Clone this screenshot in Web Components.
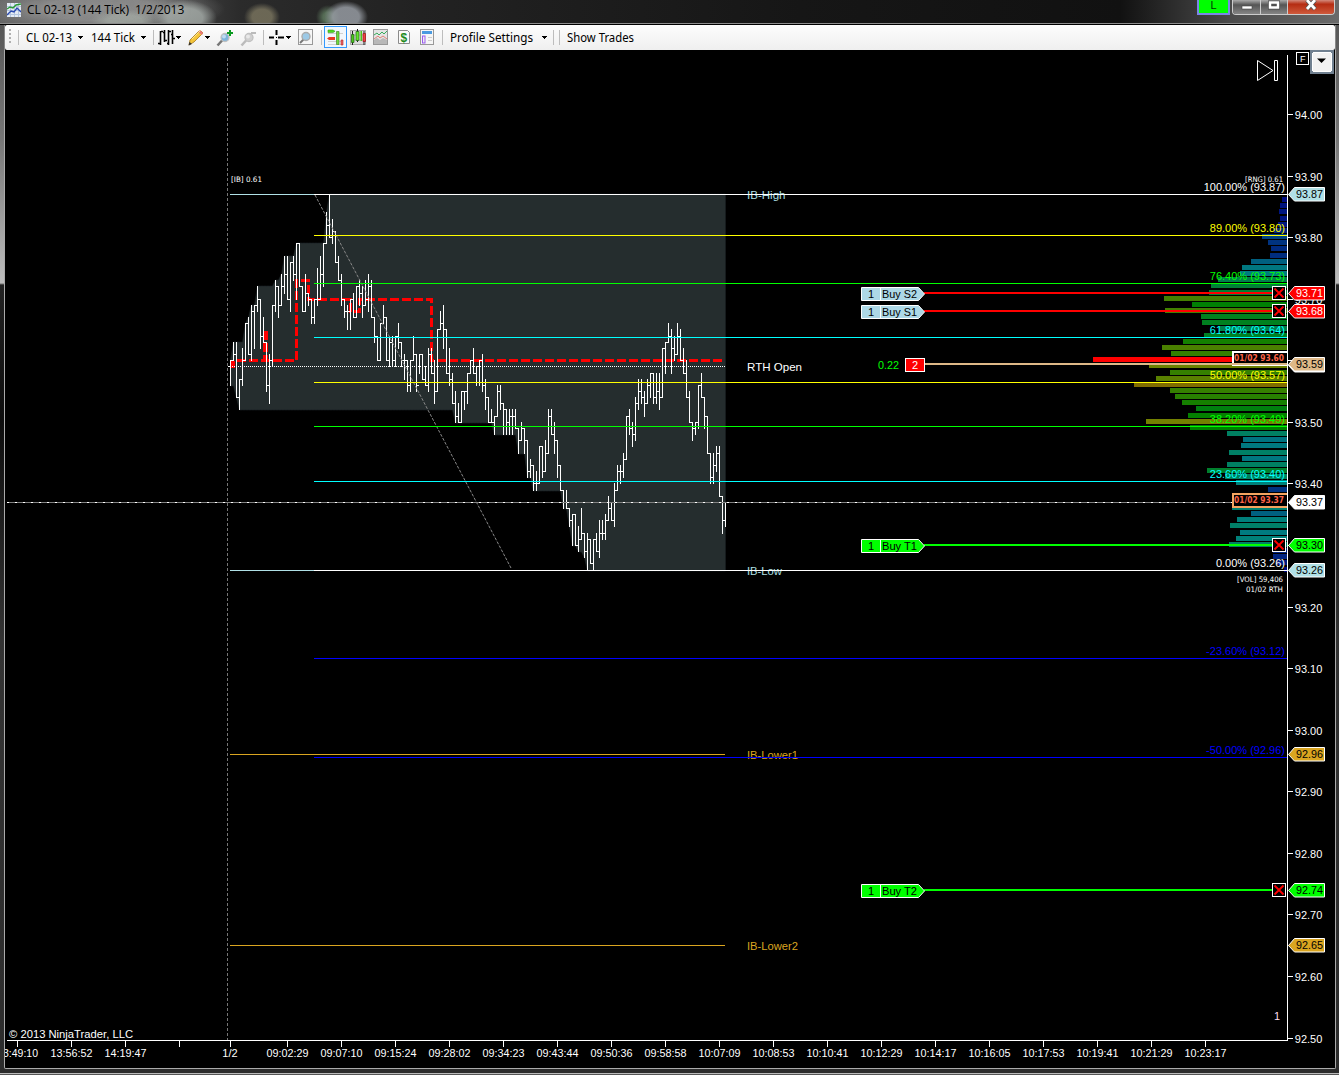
<!DOCTYPE html>
<html lang="en">
<head>
<meta charset="utf-8">
<title>CL 02-13 (144 Tick)  1/2/2013</title>
<style>
  html, body { margin: 0; height: 100%; overflow: hidden; background: #000; }
  body { font-family: "Liberation Sans", Arial, sans-serif; font-size: 11px; }
</style>
</head>
<body>
<chart-window>
  <title-bar slot="title">CL 02-13 (144 Tick)&nbsp; 1/2/2013</title-bar>
  <tool-bar slot="tools">
    <tool-grip></tool-grip>
    <tool-sep w="8"></tool-sep>
    <tool-label w="52" len="46">CL 02-13</tool-label><tool-icon w="13" name="arrow"></tool-icon>
    <tool-label w="50" len="44">144 Tick</tool-label><tool-icon w="12" name="arrow"></tool-icon>
    <tool-sep w="5"></tool-sep>
    <tool-icon w="18" name="bars"></tool-icon><tool-icon w="11" name="arrow"></tool-icon>
    <tool-icon w="18" name="pencil"></tool-icon><tool-icon w="11" name="arrow"></tool-icon>
    <tool-icon w="24" name="zoomin"></tool-icon>
    <tool-icon w="23" name="zoomout"></tool-icon>
    <tool-sep w="5"></tool-sep>
    <tool-icon w="18" name="cross"></tool-icon><tool-icon w="11" name="arrow"></tool-icon>
    <tool-icon w="24" name="page"></tool-icon>
    <tool-sep w="3"></tool-sep>
    <tool-icon w="25" name="trader"></tool-icon>
    <tool-icon w="23" name="candles"></tool-icon>
    <tool-icon w="23" name="area"></tool-icon>
    <tool-icon w="24" name="dollar"></tool-icon>
    <tool-icon w="23" name="props"></tool-icon>
    <tool-sep w="8"></tool-sep>
    <tool-label w="92" len="83">Profile Settings</tool-label><tool-icon w="11" name="arrow"></tool-icon>
    <tool-sep w="6"></tool-sep>
    <tool-sep w="8"></tool-sep>
    <tool-label w="80" len="67">Show Trades</tool-label>
  </tool-bar>
  <price-chart></price-chart>
</chart-window>

<script>
(function () {
    'use strict';

    function attach(el, html) {
        const root = el.attachShadow({ mode: 'open' });
        root.innerHTML = html;
        return root;
    }

    class ChartWindow extends HTMLElement {
        constructor() {
            super();
            attach(this, `
            <style>
              :host {
                display: grid;
                grid-template-rows: 25px 25px 1017px 8px;
                width: 1339px;
                height: 1075px;
                overflow: hidden;
                background: linear-gradient(#505050 0, #777 140px, #bdbdbd 283px, #222 285px, #0d0d0d 420px, #333 640px, #2c2c2c 100%);
              }
              .body {
                margin: 0 3px 0 4px;
                border-left: 1px solid #aaa;
                border-right: 1px solid #aaa;
                background: #000;
                overflow: hidden;
              }
              .tools { border-color: #888; }
              .foot {
                box-sizing: border-box;
                margin-left: 4px;
                margin-right: 3px;
                border: 1px solid #aaa;
                border-top: 0;
                border-radius: 0 0 3px 3px;
                height: 2px;
                background: #000;
              }
              .bottom {
                background: linear-gradient(#2c2c2c 0 6px, #bbb 6px 7px, #555 7px);
              }
            </style>
            <slot name="title"></slot>
            <div class="body tools"><slot name="tools"></slot></div>
            <div class="body"><slot></slot></div>
            <div class="bottom"><div class="foot"></div></div>`);
        }
    }

    class TitleBar extends HTMLElement {
        constructor() {
            super();
            attach(this, `
            <style>
              :host {
                display: flex;
                align-items: flex-start;
                box-sizing: border-box;
                height: 25px;
                overflow: hidden;
                border-bottom: 1px solid #000;
                box-shadow: inset 0 -1px #8c8c8c;
                background:
                  radial-gradient(ellipse 22px 16px at 346px 17px, rgba(150,155,162,.85) 60%, transparent),
                  radial-gradient(ellipse 12px 12px at 328px 17px, rgba(90,115,90,.9) 40%, transparent),
                  radial-gradient(ellipse 18px 14px at 262px 17px, rgba(130,124,100,.75) 55%, transparent),
                  radial-gradient(ellipse 32px 18px at 185px 18px, rgba(165,172,168,.8) 55%, transparent),
                  radial-gradient(ellipse 34px 12px at 125px 21px, rgba(165,172,165,.7) 50%, transparent),
                  radial-gradient(ellipse 125px 26px at 100px 9px, rgba(145,145,145,.85) 45%, transparent),
                  linear-gradient(90deg, #606060 0, #555 120px, #2b2b2b 240px, #222 420px, #161616 800px, #111 1120px, #4a4a4a 1230px, #6a6a6a 1339px);
              }
              .icon { margin: 3px 6px 0 7px; flex: none; }
              .text {
                font: 12px/20px "Open Sans", "Noto Sans", sans-serif;
                letter-spacing: -0.1px;
                color: #000;
                flex: 1;
                text-shadow: 0 0 6px rgba(190,190,190,.6);
              }
              .link {
                box-sizing: border-box;
                width: 33px; height: 15px;
                margin-right: 2px;
                border: 2px solid #7a86e8;
                border-top: 0;
                background: #0f0;
                color: #043004;
                font: 11px/11px "Liberation Sans", sans-serif;
                text-align: center;
              }
              .buttons {
                display: flex;
                height: 14px;
                margin-right: 4px;
                border: 1px solid #ccc;
                border-top: 0;
                border-radius: 0 0 4px 4px;
                overflow: hidden;
              }
              .buttons svg { display: block; }
            </style>
            <svg class="icon" width="14" height="14" viewBox="0 0 14 14">
              <rect width="14" height="14" fill="#e4ebf4"/>
              <path d="M0 3.5h14M0 7.5h14M0 11.5h14M3.5 0v14M7.5 0v14M11.5 0v14" stroke="#b4c6e0" fill="none"/>
              <path d="M0 6l3-2 3 1 3-3 5-1" stroke="#2a9a35" fill="none" stroke-width="1.400"/>
              <path d="M0 12l4-4 3 1 3-4 4 4" stroke="#2a4ab0" fill="none" stroke-width="1.400"/>
            </svg>
            <span class="text"><slot></slot></span>
            <span class="link">L</span>
            <span class="buttons">
              <svg width="101" height="14" viewBox="0 0 101 14">
                <defs>
                  <linearGradient id="g" x2="0" y2="1"><stop stop-color="#aaa"/><stop offset=".35" stop-color="#555"/><stop offset="1" stop-color="#858585"/></linearGradient>
                  <linearGradient id="r" x2="0" y2="1"><stop stop-color="#d38a7c"/><stop offset=".3" stop-color="#b52c12"/><stop offset="1" stop-color="#cf5a3c"/></linearGradient>
                </defs>
                <rect width="54" height="14" fill="url(#g)"/>
                <rect x="54" width="47" height="14" fill="url(#r)"/>
                <path d="M27.500 0v14M54.500 0v14" stroke="#ccc"/>
                <rect x="9" y="6" width="10" height="3" fill="#fff" stroke="#444" stroke-width=".6"/>
                <rect x="37" y="2.500" width="8" height="5" fill="none" stroke="#444" stroke-width="4"/>
                <rect x="37" y="2.500" width="8" height="5" fill="none" stroke="#fff" stroke-width="2.500"/>
                <path d="M74 0l8 9M82 0l-8 9" stroke="#555" stroke-width="4.500"/>
                <path d="M74 0l8 9M82 0l-8 9" stroke="#fff" stroke-width="2.800"/>
              </svg>
            </span>`);
        }
    }

    class ToolBar extends HTMLElement {
        constructor() {
            super();
            attach(this, `
            <style>
              :host {
                display: flex;
                height: 25px;
                background: linear-gradient(#fdfdfd, #efefef);
                border-radius: 2px;
              }
            </style>
            <slot></slot>`);
        }
    }

    class ToolGrip extends HTMLElement {
        constructor() {
            super();
            attach(this, `
            <style>
              :host { display: block; width: 13px; flex: none; }
              svg { display: block; }
            </style>
            <svg width="13" height="25"><path d="M5 4v16" stroke="#b0b0b0" stroke-width="2" stroke-dasharray="2 2"/></svg>`);
        }
    }

    class ToolSep extends HTMLElement {
        constructor() {
            super();
            attach(this, `
            <style>
              :host { display: block; width: ${this.getAttribute('w')}px; flex: none; }
              i { display: block; width: 1px; height: 15px; margin-top: 5px; background: #bdbdbd; }
            </style>
            <i></i>`);
        }
    }

    // label fitted to a fixed advance, like the system toolbar font
    class ToolLabel extends HTMLElement {
        constructor() {
            super();
            attach(this, `
            <style>
              :host { display: block; width: ${this.getAttribute('w')}px; flex: none; }
              svg { display: block; }
              text { font: 12px "Noto Sans", sans-serif; fill: #000; }
            </style>
            <svg width="${this.getAttribute('w')}" height="25">
              <text x="0" y="16.500" textLength="${this.getAttribute('len')}" lengthAdjust="spacingAndGlyphs">${this.textContent}</text>
            </svg>`);
        }
    }

    const LENS = (c1, c2) => `
      <path d="M1.500 20.500l5-5.500" stroke="${c1}" stroke-width="2.500"/>
      <circle cx="9" cy="12.500" r="4" fill="${c2}" stroke="#c0c0c0" stroke-width="1.300"/>
      <circle cx="8" cy="11.500" r="2" fill="#fff" opacity=".5"/>`;

    const ICONS = {
        arrow: '<path d="M0 11h5v1h-1v1h-1v1h-1v-1h-1v-1h-1z" fill="#000"/>',
        bars: '<path d="M2.500 6v14M0 18.500h2M3 6.500h2M6.500 5v12M5 7.500h1M7 15.500h2M10.500 5v15M9 18.500h1M11 6.500h2M14.500 5v14M13 9.500h1M15 13.500h2" stroke="#000" stroke-width="1.600" fill="none"/>',
        pencil: '<path d="M2 20l1-5 9-9q2-1 4 2l-9 9z" fill="#f4c53a" stroke="#a5791c" stroke-width=".8"/><path d="M11 7l4 3 1-2q-2-3-4-2z" fill="#e87878"/><path d="M5 14l8-8" stroke="#ffe98e"/><path d="M1.500 20.500l1-3.500 2.500 2z" fill="#333"/>',
        zoomin: LENS('#777', '#7db4dd') + '<path d="M11 8h6M14 5v6" stroke="#0a9a20" stroke-width="2"/>',
        zoomout: LENS('#bbb', '#d0d0d0') + '<path d="M11 8h5" stroke="#bbb" stroke-width="2"/>',
        cross: '<path d="M1 12.500h5M10 12.500h6M8.500 5v5M8.500 15v5" stroke="#000" stroke-width="2"/><path d="M8 12.500h1" stroke="#000"/>',
        page: '<rect x="1.500" y="4.500" width="14" height="15" fill="#f6f6f6" stroke="#999"/><path d="M3 18l4-4" stroke="#777" stroke-width="2"/><circle cx="9" cy="11.500" r="4" fill="#9cc9e6" stroke="#aaa" stroke-width="1.400"/>',
        trader: '<rect x=".5" y="1.500" width="22" height="21" fill="#f2f7fc" stroke="#3399ff"/><path d="M4 8.500h15M4 16.500h15M4 19.500h15" stroke="#d0d0d0"/><path d="M4 5h5l2 1.300-2 1.300h-5z" fill="#4ddb20" stroke="#399c1a" stroke-width=".6"/><path d="M3 13.500l2-1.500h6v3h-6z" fill="#e83a22"/><path d="M12.500 6.500h2.500v13h-2.500z" fill="#6ddb3d" stroke="#4b8a2c" stroke-width=".7"/><path d="M17 15h2v5h-2z" fill="#e66" stroke="#a22" stroke-width=".6"/>',
        candles: '<rect x="1.500" y="5.500" width="15" height="14" fill="#ddd" stroke="#aaa"/><path d="M3 10h12M3 15h12" stroke="#bbb"/><path d="M3.500 6v14M8.500 4v13M15 6v14" stroke="#222"/><path d="M2.500 9.500h2.500v8H2.500z" fill="#4bc41d" stroke="#1d6310" stroke-width=".7"/><path d="M7 6.500h3v9H7z" fill="#64e52e" stroke="#1d6310" stroke-width=".7"/><path d="M11.500 6h1.500v10h-1.500z" fill="#4bc41d"/><path d="M14 8.500h2.500v8H14z" fill="#e44" stroke="#911" stroke-width=".7"/>',
        area: '<rect x="1.500" y="4.500" width="14" height="15" fill="#e4e4e4" stroke="#999"/><path d="M2 15l3-2 3 2 3-2 4 2v4H2z" fill="#b8b8b8"/><path d="M2 10l3-2 2 2 3-3 2 2 3-3" stroke="#39ad5c" fill="none"/><path d="M2 14l4-3 2 2 3-2 4 3" stroke="#e08078" fill="none"/>',
        dollar: '<path d="M3.500 5.500h9l2 2v11h-11z" fill="#fafafa" stroke="#8b8b8b"/><text x="5.500" y="16.500" font-size="12" font-weight="700" font-family="Liberation Sans, sans-serif" fill="#1d8a1d">$</text>',
        props: '<rect x="1.500" y="4.500" width="13" height="15" fill="#f6f6f6" stroke="#999"/><path d="M3 7.500h10" stroke="#4a9ae0" stroke-width="3"/><rect x="3.500" y="11" width="2.500" height="7" fill="#eee" stroke="#9a5af0"/><path d="M9 12.500h4M9 15.500h4" stroke="#ccc"/>'
    };

    class ToolIcon extends HTMLElement {
        constructor() {
            super();
            const w = this.getAttribute('w');
            attach(this, `
            <style>
              :host { display: block; width: ${w}px; flex: none; }
              svg { display: block; overflow: visible; }
            </style>
            <svg width="${w}" height="25" viewBox="0 0 ${w} 25">${ICONS[this.getAttribute('name')]}</svg>`);
        }
    }

    // [high, low, close] of each bar, in ticks below 93.87
    const BARS = [
        [27,31,27],[24,27,26],[24,33,33],[30,35,30],[25,31,27],[21,27,21],[20,26,26],[18,27,19],[18,25,18],[15,19,17],
        [17,25,23],[20,24,24],[24,32,31],[26,34,27],[18,28,18],[14,19,15],[15,20,18],[13,18,15],[10,16,13],[10,17,17],
        [11,19,11],[10,14,13],[8,17,8],[8,15,15],[15,19,19],[13,19,16],[16,18,17],[17,21,20],[17,21,17],[12,18,17],
        [10,17,13],[8,15,8],[3,8,5],[0,7,7],[4,8,6],[6,11,11],[10,14,14],[13,18,17],[17,20,19],[18,22,19],
        [17,22,17],[16,20,20],[15,20,15],[14,18,16],[15,20,18],[14,18,17],[13,19,15],[14,20,20],[20,24,23],[23,27,27],
        [21,27,21],[18,21,20],[20,27,27],[23,28,24],[23,28,27],[23,28,23],[21,25,24],[24,28,27],[26,30,27],[27,32,31],
        [27,32,27],[23,27,26],[26,32,31],[26,29,26],[26,30,30],[28,31,31],[25,32,26],[25,29,29],[27,34,32],[22,32,22],
        [19,22,21],[18,25,22],[22,29,29],[25,31,30],[29,34,34],[32,37,36],[34,37,37],[32,37,32],[32,35,32],[29,34,29],
        [27,29,27],[25,29,29],[28,31,28],[27,31,27],[26,32,31],[30,35,33],[33,37,37],[35,37,37],[36,39,36],[31,36,32],
        [31,35,34],[34,39,35],[35,39,37],[35,39,36],[35,39,36],[35,38,38],[38,42,40],[37,40,38],[38,42,40],[40,46,45],
        [43,46,44],[44,48,47],[45,48,47],[41,47,41],[41,46,45],[40,45,42],[35,42,36],[35,39,39],[37,42,40],[40,46,44],
        [44,48,48],[48,51,50],[48,51,51],[51,54,53],[52,57,52],[52,57,57],[54,58,56],[51,56,55],[55,59,58],[55,61,56],
        [56,60,60],[56,61,56],[55,58,58],[53,59,55],[53,56,55],[52,56,53],[49,53,51],[50,53,53],[47,54,48],[44,48,45],
        [44,47,45],[42,46,43],[36,43,36],[35,39,38],[37,41,39],[33,40,34],[30,35,32],[30,34,33],[32,36,34],[30,34,31],
        [29,33,29],[29,34,33],[29,34,32],[29,35,33],[25,33,25],[24,29,24],[21,24,23],[22,29,25],[23,27,26],[21,26,23],
        [22,27,27],[25,29,29],[27,33,33],[32,37,37],[37,40,38],[37,39,37],[31,38,31],[29,33,33],[33,38,36],[36,42,42],
        [42,47,46],[42,47,44],[41,45,42],[41,49,49],[49,55,53],[50,54,51]
    ];

    // volume by price, px width, one entry per tick from 93.86 down
    const VOLUME = [
        5,7,8,7,9,13,25,19,16,17,36,45,47,69,76,78,123,95,122,86,85,68,83,104,125,116,194,138,117,131,153,
        117,112,105,91,99,141,97,60,44,46,58,45,60,80,62,51,19,45,50,55,36,50,57,47,51,58,14,14,10,3
    ];

    const row = t => Math.floor(194.5 + 6.157 * t);
    const hl = (x1, x2, y, c, h = 1) => `<rect x="${x1}" y="${y}" width="${x2 - x1}" height="${h}" fill="${c}"/>`;
    const vl = (x, y1, y2, c) => `<rect x="${x}" y="${y1}" width="1" height="${y2 - y1}" fill="${c}"/>`;

    function txt(s, x, y, fill, o = {}) {
        const len = o.len ? ` textLength="${o.len}" lengthAdjust="spacingAndGlyphs"` : '';
        return `<text x="${x}" y="${y}" fill="${fill}" text-anchor="${o.anchor || 'start'}" class="${o.cls || ''}"${len}>${s}</text>`;
    }

    function ibRange() {
        let hi = 99, lo = 0;
        const top = [], bottom = [];
        BARS.forEach(([h, l], k) => {
            hi = Math.min(hi, h);
            lo = Math.max(lo, l);
            top.push(`${230.5 + 3 * k},${row(hi)}`);
            bottom.unshift(`${230.5 + 3 * k},${row(lo) + 1}`);
        });
        return `<polygon points="${top.concat(bottom).join(' ')}" fill="#252d2e" stroke="#1a2021" stroke-width=".6"/>`;
    }

    function ohlc() {
        return BARS.map(([h, l, c], k) => {
            const x = 230 + 3 * k;
            let s = vl(x, row(h), row(l) + 1, '#fff');
            if (k < BARS.length - 1) s += hl(x, x + 3, row(c), '#fff');
            return s;
        }).join('') + hl(228, 230, row(28), '#fff');
    }

    function volume() {
        return VOLUME.map((w, i) => {
            const c = w === 194 ? '#f00' : `hsl(${Math.round(240 * (1 - w / 194))},100%,25%)`;
            return hl(1287 - w, 1287, row(i + 1) - 3, c, 5);
        }).join('');
    }

    function fib(y, color, label) {
        return hl(314, 1287, y, color) + txt(label, 1285, y - 3, color, { anchor: 'end' });
    }

    function tagShape(y, fill) {
        return `<path d="M1288.500 ${y}.5L1294.500 ${y - 6.5}H1324.500V${y + 7}H1294.500Z" fill="${fill}" stroke="#fff"/>`;
    }

    function priceTag(y, fill, label, color = '#000') {
        return tagShape(y, fill) + txt(label, 1296, y + 4, color, { len: 27 });
    }

    function closeBox(y) {
        return `<rect x="1272.500" y="${y - 6.5}" width="13" height="13" fill="#000" stroke="#fff"/>` +
            `<path d="M1274.500 ${y - 4.5}l9 9m0 -9l-9 9" stroke="#f00" stroke-width="1.800"/>`;
    }

    function order(y, fill, line, label) {
        return hl(924, 1273, y - 1, line, 2) +
            `<path d="M861.500 ${y - 5.5}H918.500L924.500 ${y + 1}L918.500 ${y + 7.5}H861.500Z" fill="${fill}" stroke="#fff"/>` +
            vl(880, y - 5, y + 7, '#fff') +
            txt('1', 871, y + 5, '#000', { anchor: 'middle' }) +
            txt(label, 882, y + 5, '#000', { len: 35 });
    }

    function sessionBox(y, h, border, label) {
        return `<rect x="1233" y="${y + 1}" width="54" height="${h - 2}" fill="#000"/>` +
            hl(1232, 1287, y, border, 2) + hl(1232, 1287, y + h - 2, border, 2) + hl(1232, 1234, y, border, h) +
            txt(label, 1234, y + 10, '#ff6347', { cls: 'session', len: 50 });
    }

    function priceAxis() {
        let s = vl(1287, 55, 1041, '#fff');
        for (let i = 0; i <= 15; i++) {
            const y = Math.floor(114.45 + 61.573 * i);
            s += hl(1288, 1293, y, '#fff') + txt((94 - i / 10).toFixed(2), 1294.8, y + 5, '#fff');
        }
        return s;
    }

    function timeAxis() {
        const first = ['3:49:10', '13:56:52', '14:19:47', ''];
        const rest = ['09:02:29', '09:07:10', '09:15:24', '09:28:02', '09:34:23', '09:43:44', '09:50:36', '09:58:58', '10:07:09',
            '10:08:53', '10:10:41', '10:12:29', '10:14:17', '10:16:05', '10:17:53', '10:19:41', '10:21:29', '10:23:17'];
        let s = hl(7, 1288, 1040, '#fff');
        first.forEach((t, i) => {
            const x = 17 + 54 * i;
            s += vl(x, 1041, 1047, '#fff');
            if (t) s += txt(t, i ? x + 0.5 : 38, 1057, '#fff', i ? { anchor: 'middle', len: 42 } : { anchor: 'end', len: 35 });
        });
        s += vl(230, 1041, 1047, '#fff') + txt('1/2', 230, 1057, '#fff', { anchor: 'middle' });
        rest.forEach((t, i) => {
            const x = 287 + 54 * i;
            s += vl(x, 1041, 1047, '#fff') + txt(t, x + 0.5, 1057, '#fff', { anchor: 'middle', len: 42 });
        });
        return s;
    }

    class PriceChart extends HTMLElement {
        constructor() {
            super();
            attach(this, `
            <style>
              :host { display: block; height: 1017px; }
              svg { display: block; background: #000; }
              rect { shape-rendering: crispEdges; }
              text { font: 11px "Liberation Sans", Arial, sans-serif; white-space: pre; }
              .tiny { font: 7.5px "DejaVu Sans Condensed", "DejaVu Sans", sans-serif; }
              .session { font: bold 8px "DejaVu Sans", sans-serif; }
            </style>
            <svg width="1330" height="1017" viewBox="5 50 1330 1017">
              ${this.range()}
              ${this.profile()}
              ${priceAxis()}
              ${timeAxis()}
              ${this.orders()}
              ${this.corner()}
            </svg>`);
        }

        range() {
            return ibRange() +
                '<path d="M227.500 58V1040" stroke="#777" stroke-dasharray="3 2"/>' +
                '<rect x="231" y="361" width="4" height="7" fill="#f00"/>' +
                '<path d="M237 360.500H264.500V330.500H266.500V360.500H296.500V280.500H308.500V299.500H350.500V311.500H359.500V299.500H431.500V360.500H725" fill="none" stroke="#f00" stroke-width="3" stroke-dasharray="9 3" shape-rendering="crispEdges"/>' +
                '<path d="M228 366.500H725" stroke="#fff" stroke-dasharray="1 1" shape-rendering="crispEdges"/>' +
                hl(230, 725, 194, '#b0e0e6') + hl(230, 725, 570, '#b0e0e6') +
                hl(230, 725, 754, '#daa520') + hl(230, 725, 945, '#daa520') +
                ohlc() +
                '<path d="M315 195L511 568" stroke="#888" stroke-dasharray="3 1.500"/>' +
                txt('[IB] 0.61', 231, 182, '#fff', { cls: 'tiny', len: 31 }) +
                txt('IB-High', 747, 199, '#b0e0e6', { len: 38.5 }) +
                txt('RTH Open', 747, 371, '#fff', { len: 55 }) +
                txt('IB-Low', 747, 575, '#b0e0e6', { len: 35 }) +
                txt('IB-Lower1', 747, 759, '#daa520', { len: 51 }) +
                txt('IB-Lower2', 747, 950, '#daa520', { len: 51 });
        }

        profile() {
            return volume() +
                fib(194, '#fff', '100.00% (93.87)') +
                fib(235, '#ff0', '89.00% (93.80)') +
                fib(283, '#0f0', '76.40% (93.73)') +
                fib(337, '#0ff', '61.80% (93.64)') +
                fib(382, '#ff0', '50.00% (93.57)') +
                fib(426, '#0f0', '38.20% (93.49)') +
                fib(481, '#0ff', '23.60% (93.40)') +
                fib(570, '#fff', '0.00% (93.26)') +
                fib(658, '#00f', '-23.60% (93.12)') +
                fib(757, '#00f', '-50.00% (92.96)') +
                hl(7, 1287, 502, '#808080') +
                '<path d="M7 502.500H1287" stroke="#fff" stroke-dasharray="2 6" shape-rendering="crispEdges"/>' +
                txt('[RNG] 0.61', 1245, 182, '#fff', { cls: 'tiny', len: 38 }) +
                txt('[VOL] 59,406', 1237, 582, '#fff', { cls: 'tiny', len: 46 }) +
                txt('01/02 RTH', 1246, 592, '#fff', { cls: 'tiny', len: 37 });
        }

        orders() {
            return order(293, '#add8e6', '#f00', 'Buy S2') +
                order(311, '#add8e6', '#f00', 'Buy S1') +
                order(545, '#0f0', '#0f0', 'Buy T1') +
                order(890, '#0f0', '#0f0', 'Buy T2') +
                sessionBox(351, 15, '#fff', '01/02 93.60') +
                sessionBox(493, 15, '#f4a460', '01/02 93.37') +
                hl(925, 1287, 363, '#deb887', 2) +
                txt('0.22', 878, 369, '#0f0', { len: 21 }) +
                '<rect x="905.500" y="358.500" width="19" height="13" fill="#f00" stroke="#fff"/>' +
                txt('2', 915, 369, '#fff', { anchor: 'middle' }) +
                [293, 311, 545, 890].map(closeBox).join('') +
                priceTag(194, '#b0e0e6', '93.87') +
                priceTag(293, '#f00', '93.71', '#fff') +
                priceTag(311, '#f00', '93.68', '#fff') +
                tagShape(365, '#fff') +
                priceTag(364, '#deb887', '93.59') +
                priceTag(502, '#fff', '93.37') +
                priceTag(545, '#0f0', '93.30') +
                priceTag(570, '#b0e0e6', '93.26') +
                priceTag(754, '#daa520', '92.96') +
                priceTag(890, '#0f0', '92.74') +
                priceTag(945, '#daa520', '92.65');
        }

        corner() {
            return '<path d="M1257.500 60.500V80.500L1273 70.500ZM1274.500 60.500H1277.500V80.500H1274.500Z" fill="none" stroke="#fff"/>' +
                '<rect x="1296.500" y="52.500" width="12" height="12" fill="#000" stroke="#fff"/>' +
                '<text x="1302.700" y="62" fill="#fff" text-anchor="middle" style="font-size:9px">F</text>' +
                '<rect x="1310" y="50" width="24" height="24" fill="#708090"/>' +
                '<rect x="1312.500" y="52.500" width="19" height="19" rx="2" fill="#f2f2f2" stroke="#fff"/>' +
                '<path d="M1317 58.500h9l-4.500 4.500z" fill="#000"/>' +
                txt('1', 1274, 1020, '#fde') +
                txt('© 2013 NinjaTrader, LLC', 9, 1038, '#fff', { len: 124 });
        }
    }

    customElements.define('tool-grip', ToolGrip);
    customElements.define('tool-sep', ToolSep);
    customElements.define('tool-label', ToolLabel);
    customElements.define('tool-icon', ToolIcon);
    customElements.define('tool-bar', ToolBar);
    customElements.define('title-bar', TitleBar);
    customElements.define('price-chart', PriceChart);
    customElements.define('chart-window', ChartWindow);
})();
</script>
</body>
</html>
